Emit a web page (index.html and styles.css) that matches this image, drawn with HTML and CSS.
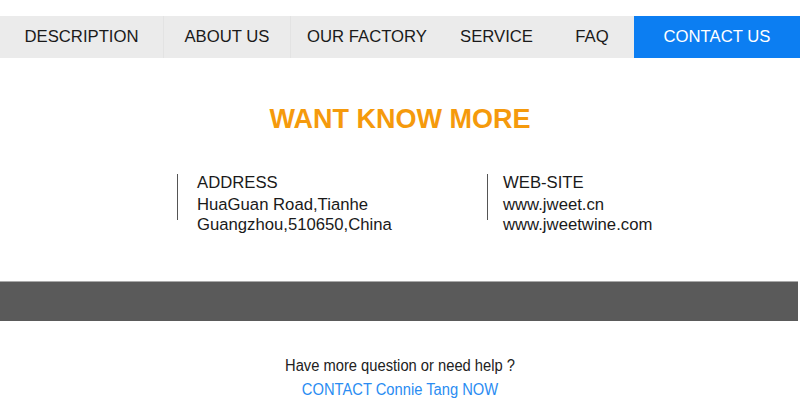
FILE: index.html
```html
<!DOCTYPE html>
<html lang="en">
<head>
<meta charset="utf-8">
<title>Want know more</title>
<link rel="stylesheet" href="styles.css">
</head>
<body>
<nav class="nav">
  <a class="nav-item w-desc">DESCRIPTION</a>
  <a class="nav-item w-about sep">ABOUT US</a>
  <a class="nav-item w-factory sep">OUR FACTORY</a>
  <a class="nav-item w-service">SERVICE</a>
  <a class="nav-item w-faq">FAQ</a>
  <a class="nav-item w-contact active">CONTACT US</a>
</nav>

<h1 class="title">WANT KNOW MORE</h1>

<section class="info">
  <div class="info-col col-address">
    <div class="info-head">ADDRESS</div>
    <div class="info-line">HuaGuan Road,Tianhe</div>
    <div class="info-line">Guangzhou,510650,China</div>
  </div>
  <div class="info-col col-web">
    <div class="info-head">WEB-SITE</div>
    <div class="info-line">www.jweet.cn</div>
    <div class="info-line">www.jweetwine.com</div>
  </div>
</section>

<div class="band"></div>

<section class="help">
  <p class="help-q">Have more question or need help ?</p>
  <p class="help-link">CONTACT Connie Tang NOW</p>
</section>
</body>
</html>
```

FILE: styles.css
```css
* { box-sizing: border-box; }

body {
  margin: 0;
  background: #ffffff;
  font-family: "Liberation Sans", Arial, sans-serif;
  color: #1a1a1a;
}

.nav {
  margin-top: 16px;
  height: 42px;
  display: flex;
  background: #ebebeb;
}

.nav-item {
  display: flex;
  align-items: center;
  justify-content: center;
  font-size: 16.7px;
  color: #1a1a1a;
  white-space: nowrap;
}

.nav-item.sep { border-left: 1px solid #e3e3e3; }

.w-desc { width: 163px; }
.w-about { width: 127px; }
.w-factory { width: 153px; }
.w-service { width: 107px; }
.w-faq { width: 84px; }
.w-contact { width: 166px; }

.nav-item.active {
  background: #0c7ef2;
  color: #ffffff;
}

.title {
  margin: 46px 0 0;
  text-align: center;
  font-size: 27px;
  line-height: 30px;
  font-weight: bold;
  color: #f59a0c;
}

.info {
  margin: 39px 0 0 177px;
  display: flex;
}

.info-col {
  position: relative;
  padding-left: 20px;
  font-size: 16.7px;
  line-height: 20px;
  color: #1a1a1a;
}

.info-col::before {
  content: "";
  position: absolute;
  left: 0;
  top: 1px;
  width: 1px;
  height: 46px;
  background: #555555;
}

.col-address { width: 310px; }
.col-web { padding-left: 16px; }

.info-head { margin-bottom: 2px; }

.band {
  margin-top: 46px;
  height: 40px;
  width: 798px;
  background: #5a5a5a;
  border-top: 1px solid #a9a9a9;
}

.help {
  margin-top: 33px;
  text-align: center;
  font-size: 16px;
  line-height: 24px;
}

.help p {
  margin: 0;
  transform: scaleX(0.92);
}

.help-q { color: #222222; }
.help-link { color: #2a8cf2; }
```
